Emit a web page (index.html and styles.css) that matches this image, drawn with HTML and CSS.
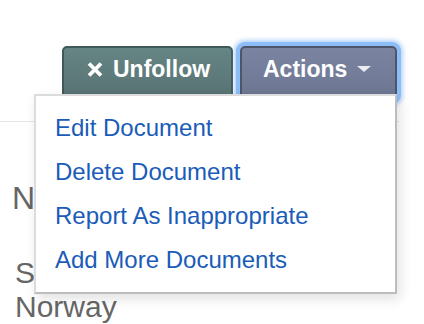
FILE: index.html
```html
<!doctype html>
<html>
<head>
<meta charset="utf-8">
<title>Document</title>
<link rel="stylesheet" href="styles.css">
</head>
<body>
<div class="header">
	<div class="toolbar">
		<a href="#" class="btn btn-unfollow">
			<svg class="icon-x" width="16" height="15" viewBox="0 0 16 15"><path d="M2 1.5L14 13.5M14 1.5L2 13.5" stroke="#fff" stroke-width="3.8" fill="none"/></svg>
			Unfollow
		</a>
		<div class="btn-group">
			<a href="#" class="btn btn-actions">Actions <span class="caret"></span></a>
			<ul class="dropdown">
				<li><a href="#">Edit Document</a></li>
				<li><a href="#">Delete Document</a></li>
				<li><a href="#">Report As Inappropriate</a></li>
				<li><a href="#">Add More Documents</a></li>
			</ul>
		</div>
	</div>
</div>
<div class="content">
	<h2>Name</h2>
	<p>Stavanger<br>Norway</p>
</div>
</body>
</html>
```
FILE: styles.css
```css
*{ margin:0; padding:0; list-style:none;}
body{ font-family:"Liberation Sans", Arial, sans-serif; color:#666; background:#fff;}
a{ text-decoration:none;}
.header{ width:399px; height:75px; padding-top:46px; border-bottom:1px solid #e6e6e6;}
.toolbar{ display:flex; justify-content:flex-end; align-items:flex-start; gap:7px; padding-right:2px;}
.btn{ display:flex; align-items:center; height:54px; padding-bottom:8px; box-sizing:border-box; border:2px solid; border-radius:5px; color:#fff; font-size:23px; font-weight:bold; white-space:nowrap;}
.btn-unfollow{ width:171px; padding-left:23px; padding-right:21px; gap:10px; background:linear-gradient(#668585,#587272); border-color:#3f5858;}
.btn-actions{ width:157px; padding-left:21px; padding-right:23px; background:linear-gradient(#7a83a0,#6d7691); border-color:#4d556b; box-shadow:0 0 0 4px #8dbdf7, 0 0 4px 6px rgba(120,175,245,.55);}
.icon-x{ display:block; flex:none;}
.caret{ display:inline-block; margin-left:10px; width:0; height:0; border-top:6px solid rgba(255,255,255,.85); border-left:7px solid transparent; border-right:7px solid transparent;}
.btn-group{ position:relative;}
.dropdown{ position:absolute; right:0; top:48px; width:363px; box-sizing:border-box; padding:10px 0; background:#fff; border:2px solid; border-color:#dcdcdc #bdbdbd #bdbdbd #dcdcdc; box-shadow:3px 5px 12px rgba(0,0,0,.12); z-index:2;}
.dropdown li a{ display:block; padding:0 19px; line-height:44px; font-size:24px; color:#1a5cb8;}
.content{ padding-left:12px;}
.content h2{ margin-top:58px; font-size:32px; line-height:37px; font-weight:normal;}
.content p{ margin-top:39px; padding-left:3px; font-size:30px; line-height:34px;}
```
